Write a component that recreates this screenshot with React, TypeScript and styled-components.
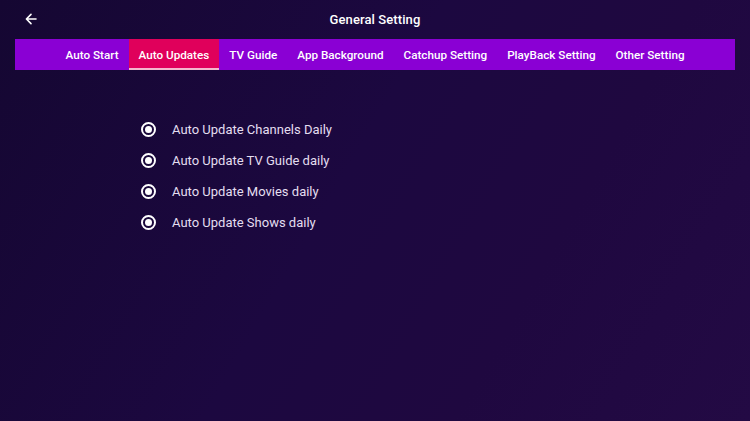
import { FC } from "react";
import styled, { createGlobalStyle } from "styled-components";

const GlobalStyle = createGlobalStyle`
	html, body {
		margin: 0;
		padding: 0;
		width: 100%;
		height: 100%;
		overflow: hidden;
	}
	body {
		font-family: Roboto, "Liberation Sans", sans-serif;
		background: #1a0838;
	}
`;

const tabs = [
	"Auto Start",
	"Auto Updates",
	"TV Guide",
	"App Background",
	"Catchup Setting",
	"PlayBack Setting",
	"Other Setting",
];

const options = [
	"Auto Update Channels Daily",
	"Auto Update TV Guide daily",
	"Auto Update Movies daily",
	"Auto Update Shows daily",
];

const App: FC = () => {
	return (
		<>
			<GlobalStyle />
			<Screen>
				<Header>
					<BackButton aria-label="back">
						<svg width="12" height="12" viewBox="0 0 12 12" fill="none">
							<path
								d="M11 6H1.6M6 1.4L1.4 6L6 10.6"
								stroke="#ffffff"
								strokeWidth="1.6"
								strokeLinecap="round"
								strokeLinejoin="round"
							/>
						</svg>
					</BackButton>
					<Title>General Setting</Title>
				</Header>
				<TabBar>
					{tabs.map((t) => (
						<Tab key={t} $active={t === "Auto Updates"}>
							{t}
						</Tab>
					))}
				</TabBar>
				<OptionList>
					{options.map((o) => (
						<Option key={o}>
							<Radio />
							<span>{o}</span>
						</Option>
					))}
				</OptionList>
			</Screen>
		</>
	);
};

const Screen = styled.div`
	width: 750px;
	height: 421px;
	box-sizing: border-box;
	padding: 0 15px;
	background: linear-gradient(120deg, #150732 0%, #1c0840 45%, #1f0840 70%, #230a44 100%);
	display: flex;
	flex-direction: column;
`;

const Header = styled.div`
	height: 39px;
	display: flex;
	align-items: center;
	justify-content: center;
	position: relative;
`;

const BackButton = styled.div`
	position: absolute;
	left: 10px;
	top: 13px;
	display: flex;
`;

const Title = styled.h1`
	margin: 0;
	font-size: 13px;
	font-weight: 500;
	color: #ffffff;
	letter-spacing: 0.1px;
`;

const TabBar = styled.div`
	height: 31px;
	background: #8a00d4;
	display: flex;
	justify-content: center;
	align-items: stretch;
`;

const Tab = styled.div<{ $active?: boolean }>`
	padding: 0 10px;
	display: flex;
	align-items: center;
	font-size: 11.7px;
	font-weight: 500;
	color: #ffffff;
	white-space: nowrap;
	background: ${(p) => (p.$active ? "#e0005b" : "transparent")};
	box-shadow: ${(p) => (p.$active ? "inset 0 -2px 0 #f3b8cc" : "none")};
`;

const OptionList = styled.div`
	display: flex;
	flex-direction: column;
	gap: 11.3px;
	padding: 49px 0 0 126px;
`;

const Option = styled.div`
	height: 20px;
	display: flex;
	align-items: center;
	gap: 16px;
	font-size: 13px;
	color: #e4def0;
`;

const Radio = styled.div`
	width: 15px;
	height: 15px;
	box-sizing: border-box;
	border: 2px solid #ffffff;
	border-radius: 50%;
	display: flex;
	align-items: center;
	justify-content: center;
	&::after {
		content: "";
		width: 7px;
		height: 7px;
		border-radius: 50%;
		background: #ffffff;
	}
`;

export default App;
